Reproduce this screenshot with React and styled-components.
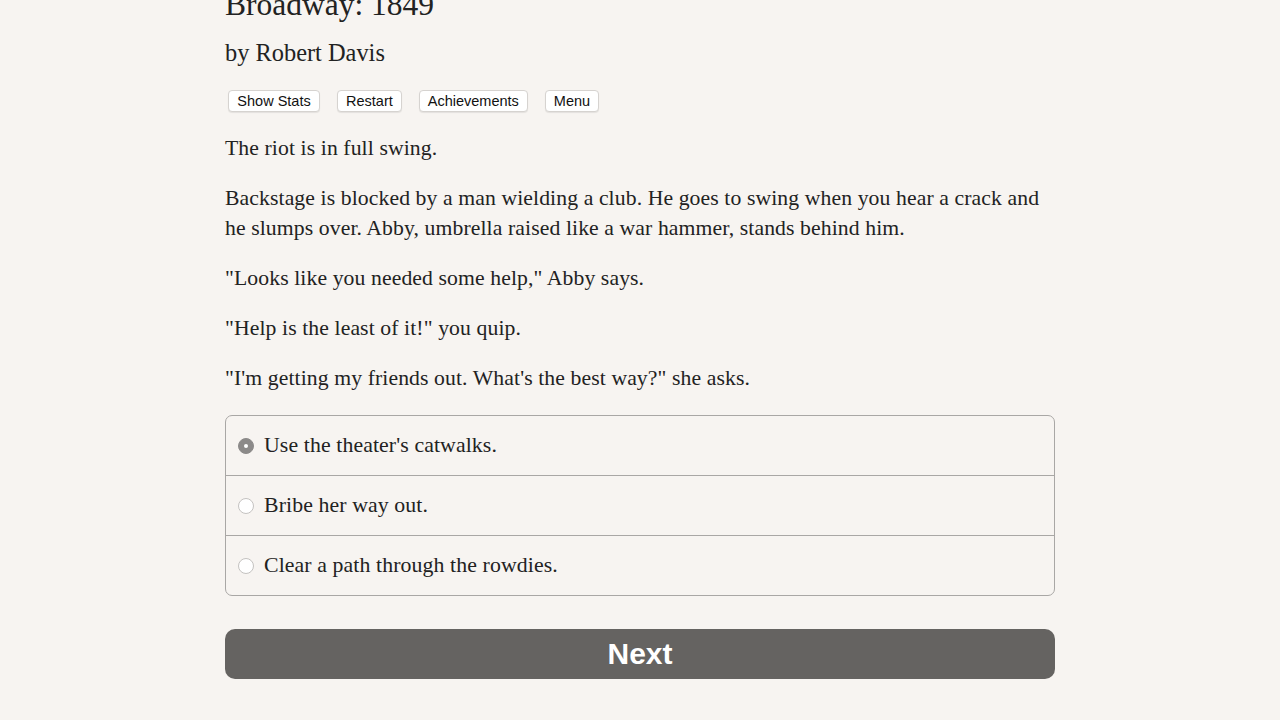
import React, { useState } from 'react';
import styled, { createGlobalStyle } from 'styled-components';

const GlobalStyle = createGlobalStyle`
    html, body {
        margin: 0;
        padding: 0;
        background-color: #f7f4f1;
    }
    body {
        font-family: "Liberation Serif", "DejaVu Serif", serif;
        color: #222;
    }
`;

const Page = styled.div`
    width: 830px;
    margin-left: 225px;
`;

const Title = styled.h1`
    font-size: 31.5px;
    font-weight: normal;
    margin: -14px 0 0;
    line-height: 38px;
`;

const Author = styled.h2`
    font-size: 24.4px;
    font-weight: normal;
    margin: 13px 0 0;
    line-height: 32px;
`;

const Toolbar = styled.div`
    display: flex;
    gap: 17px;
    margin: 21px 0 0 3px;
`;

const ToolButton = styled.button`
    font-family: "Liberation Sans", Arial, sans-serif;
    font-size: 14.5px;
    color: #111;
    background-color: #fff;
    border: 1px solid #d6d3d0;
    border-radius: 4px;
    padding: 2px 8px;
    min-width: ${props => props.wide ? '92px' : 'auto'};
    height: 22px;
    line-height: 16px;
    box-shadow: 0 1px 1px rgba(0, 0, 0, 0.08);
    cursor: pointer;
`;

const Story = styled.div`
    margin-top: 21px;
`;

const Paragraph = styled.p`
    font-size: 21.7px;
    letter-spacing: 0.1px;
    line-height: 30px;
    margin: 0 0 20px;
`;

const Choices = styled.div`
    border: 1px solid #a9a7a5;
    border-radius: 7px;
    overflow: hidden;
    margin-top: 22px;
`;

const ChoiceRow = styled.label`
    display: flex;
    align-items: center;
    height: 59px;
    padding-left: 12px;
    font-size: 21.8px;
    letter-spacing: 0.1px;
    cursor: pointer;

    & + & {
        border-top: 1px solid #a9a7a5;
    }
`;

const Radio = styled.span`
    width: 16px;
    height: 16px;
    border-radius: 50%;
    box-sizing: border-box;
    margin-right: 10px;
    flex-shrink: 0;
    display: flex;
    align-items: center;
    justify-content: center;
    background-color: ${props => props.checked ? '#8c8a89' : '#fff'};
    border: 1px solid ${props => props.checked ? '#8c8a89' : '#c4c2c0'};

    &::after {
        content: '';
        width: 4px;
        height: 4px;
        border-radius: 50%;
        background-color: #fff;
        display: ${props => props.checked ? 'block' : 'none'};
    }
`;

const NextButton = styled.button`
    display: block;
    width: 100%;
    height: 50px;
    margin-top: 33px;
    background-color: #656361;
    color: #fff;
    border: none;
    border-radius: 10px;
    font-family: "Liberation Sans", Arial, sans-serif;
    font-weight: bold;
    font-size: 30px;
    cursor: pointer;
`;

const choices = [
    "Use the theater's catwalks.",
    'Bribe her way out.',
    'Clear a path through the rowdies.',
];

const App = () => {
    const [selected, setSelected] = useState(0);

    return (
        <Page>
            <GlobalStyle />
            <Title>Broadway: 1849</Title>
            <Author>by Robert Davis</Author>
            <Toolbar>
                <ToolButton wide>Show Stats</ToolButton>
                <ToolButton>Restart</ToolButton>
                <ToolButton>Achievements</ToolButton>
                <ToolButton>Menu</ToolButton>
            </Toolbar>
            <Story>
                <Paragraph>The riot is in full swing.</Paragraph>
                <Paragraph>
                    Backstage is blocked by a man wielding a club. He goes to swing when you hear a crack and he slumps over. Abby, umbrella raised like a war hammer, stands behind him.
                </Paragraph>
                <Paragraph>"Looks like you needed some help," Abby says.</Paragraph>
                <Paragraph>"Help is the least of it!" you quip.</Paragraph>
                <Paragraph>"I'm getting my friends out. What's the best way?" she asks.</Paragraph>
            </Story>
            <Choices>
                {choices.map((text, i) => (
                    <ChoiceRow key={text} onClick={() => setSelected(i)}>
                        <Radio checked={selected === i} />
                        {text}
                    </ChoiceRow>
                ))}
            </Choices>
            <NextButton>Next</NextButton>
        </Page>
    );
};

export default App;
